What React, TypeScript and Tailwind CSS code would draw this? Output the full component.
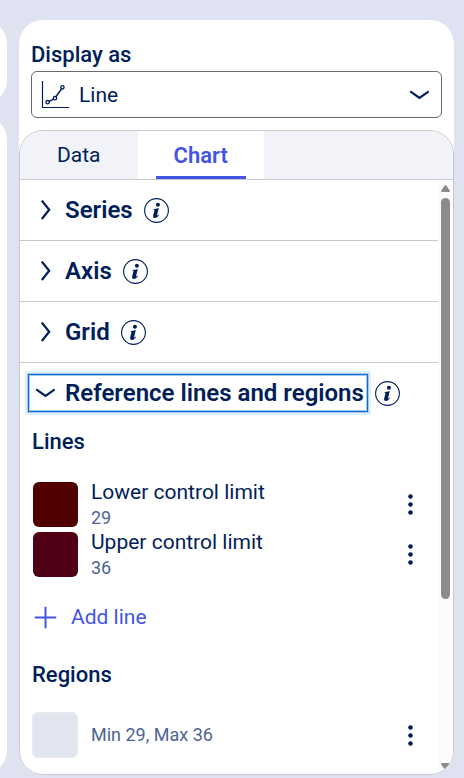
import React, { useState } from "react";

const lines = [
  { name: "Lower control limit", value: 29, swatch: "bg-[#500000]" },
  { name: "Upper control limit", value: 36, swatch: "bg-[#500014]" },
];

function Chevron({ open }: { open?: boolean }) {
  return (
    <svg
      className="w-5 h-5 shrink-0"
      viewBox="0 0 20 20"
      fill="none"
      stroke="currentColor"
      strokeWidth="2.2"
    >
      {open ? (
        <path d="M1.2 6.4 L10.5 13 L19.8 6.4" />
      ) : (
        <path d="M6.8 0.6 L14.2 9.8 L6.8 19" />
      )}
    </svg>
  );
}

function InfoButton({ label }: { label: string }) {
  return (
    <button type="button" aria-label={`About ${label}`} className="shrink-0">
      <svg className="w-[25px] h-[25px]" viewBox="0 0 25 25" fill="none">
        <circle cx="12.5" cy="12.5" r="11.9" stroke="currentColor" strokeWidth="1.1" />
        <circle cx="13.9" cy="6.7" r="2" fill="currentColor" />
        <path
          d="M9.4 11 C11.3 10.9 12.9 10.6 14.8 10 L13 17.2 C12.8 18.1 13.2 18 14.7 16.6 L15.1 17 C13.6 18.9 12.4 19.9 11 19.9 C9.4 19.9 8.8 18.9 9.2 17.3 L10.4 12.7 C10.6 11.9 10.4 11.7 9.3 11.6 Z"
          fill="currentColor"
        />
      </svg>
    </button>
  );
}

function MoreButton({ label }: { label: string }) {
  return (
    <button type="button" aria-label={`Options for ${label}`} className="px-2">
      <svg className="w-5 h-6" viewBox="0 0 20 24" fill="currentColor">
        <circle cx="10.5" cy="4.5" r="2.3" />
        <circle cx="10.5" cy="12.5" r="2.3" />
        <circle cx="10.5" cy="20.5" r="2.3" />
      </svg>
    </button>
  );
}

function SectionHeader({
  title,
  open,
  onToggle,
}: {
  title: string;
  open: boolean;
  onToggle: () => void;
}) {
  return (
    <div className="h-[60px] px-2 flex items-center gap-[7px]">
      <button
        type="button"
        aria-expanded={open}
        onClick={onToggle}
        className={
          open
            ? "h-[38px] pl-[6px] pr-[3px] flex items-center gap-[10px] text-2xl font-semibold whitespace-nowrap border border-[#0f6cd0] shadow-[inset_0_0_0_1px_#a3c9ee,0_0_0_1px_#a3c9ee,0_0_0_3px_#e3effa]"
            : "h-[38px] pl-[6px] pr-[3px] flex items-center gap-[10px] text-2xl font-semibold whitespace-nowrap border border-transparent"
        }
      >
        <Chevron open={open} />
        {title}
      </button>
      <InfoButton label={title} />
    </div>
  );
}

function AddButton({ children }: { children: React.ReactNode }) {
  return (
    <button
      type="button"
      className="pl-[14px] flex items-center gap-[14px] text-[21px] leading-7 text-[#4355e4]"
    >
      <svg className="w-[23px] h-[23px]" viewBox="0 0 23 23" fill="none" stroke="currentColor" strokeWidth="2">
        <path d="M11.5 0.8 V22.2 M0.8 11.5 H22.2" />
      </svg>
      {children}
    </button>
  );
}

export default function App() {
  const [tab, setTab] = useState("Chart");
  const [openSection, setOpenSection] = useState("Reference lines and regions");

  const toggle = (title: string) =>
    setOpenSection(openSection === title ? "" : title);

  return (
    <div className="min-h-screen flex gap-3 pr-[10px] bg-[#dfe3f1] text-[#001e5a] font-[Roboto,sans-serif]">
      <div className="w-[7px] shrink-0 flex flex-col items-end gap-3 pt-5 pb-1 overflow-hidden">
        <div className="w-16 h-[84px] rounded-3xl bg-white" />
        <div className="w-16 flex-1 rounded-3xl bg-white" />
      </div>

      <main className="flex-1 min-w-0 mt-5 mb-[3px] flex flex-col rounded-3xl bg-white">
        <div className="px-3 pt-[21px]">
          <label htmlFor="display-as" className="block text-[22px] leading-7 font-medium">
            Display as
          </label>
          <div className="relative mt-[2px]">
            <select
              id="display-as"
              className="w-full h-[47px] pt-[2px] pl-[47px] pr-12 appearance-none rounded-md border border-[#6b6b6b] bg-white text-[21px]"
            >
              <option>Line</option>
              <option>Bar</option>
            </select>
            <svg
              className="absolute left-[10px] top-[9px] w-7 h-7 pointer-events-none"
              viewBox="0 0 28 28"
              fill="none"
              stroke="currentColor"
            >
              <path d="M1.5 1 V27.5 H28" strokeWidth="1.2" />
              <path d="M8 21.6 L12.8 18.9 M15 16.5 L20.5 9" strokeWidth="1.4" />
              <circle cx="6.6" cy="22.2" r="1.7" strokeWidth="1.3" />
              <circle cx="14" cy="18.2" r="1.7" strokeWidth="1.3" />
              <circle cx="21.4" cy="7.3" r="1.7" strokeWidth="1.3" />
            </svg>
            <div className="absolute right-[13px] top-[14px] pointer-events-none">
              <Chevron open />
            </div>
          </div>
        </div>

        <section className="mt-3 flex-1 flex flex-col rounded-3xl border border-[#c9c9cb] overflow-hidden">
          <div role="tablist" className="h-[49px] flex bg-[#f2f3f9] border-b border-[#c9c9cb]">
            {["Data", "Chart"].map((name) => (
              <button
                key={name}
                type="button"
                role="tab"
                aria-selected={tab === name}
                onClick={() => setTab(name)}
                className={
                  tab === name
                    ? "px-[18px] flex bg-white text-[22px] font-semibold text-[#4355e4]"
                    : "px-[19px] flex text-[21px]"
                }
              >
                <span
                  className={
                    tab === name
                      ? "h-full px-[18px] pt-1 flex items-center border-b-3 border-[#4355e4]"
                      : "h-full px-[18px] pt-1 flex items-center border-b-3 border-transparent"
                  }
                >
                  {name}
                </span>
              </button>
            ))}
          </div>

          <div className="flex-1 flex">
            <div className="flex-1 min-w-0">
              {["Series", "Axis", "Grid"].map((title) => (
                <div key={title} className="border-b border-[#c9c9cb]">
                  <SectionHeader
                    title={title}
                    open={openSection === title}
                    onToggle={() => toggle(title)}
                  />
                </div>
              ))}
              <SectionHeader
                title="Reference lines and regions"
                open={openSection === "Reference lines and regions"}
                onToggle={() => toggle("Reference lines and regions")}
              />

              <h3 className="mt-[5px] px-3 text-[22px] leading-7 font-medium">Lines</h3>
              <ul className="mt-[23px] pl-[13px] pr-[10px]">
                {lines.map((line) => (
                  <li key={line.name} className="h-[50px] flex items-center gap-[13px]">
                    <div className={`w-[45px] h-[45px] shrink-0 rounded-md ${line.swatch}`} />
                    <div className="flex-1">
                      <div className="text-[21px] leading-7">{line.name}</div>
                      <div className="text-lg leading-6 text-[#4d6592]">{line.value}</div>
                    </div>
                    <MoreButton label={line.name} />
                  </li>
                ))}
              </ul>
              <div className="mt-6">
                <AddButton>Add line</AddButton>
              </div>

              <h3 className="mt-[30px] px-3 text-[22px] leading-7 font-medium">Regions</h3>
              <div className="mt-[23px] mb-[15px] pl-3 pr-[10px] flex items-center gap-[13px]">
                <div className="w-[46px] h-[46px] shrink-0 rounded-md border border-[#ebebeb] bg-[#e2e6f0]" />
                <div className="flex-1 text-lg text-[#4d6592]">Min 29, Max 36</div>
                <MoreButton label="Min 29, Max 36" />
              </div>
            </div>

            <div className="w-[15px] shrink-0 pt-[5px] pb-1 flex flex-col items-center bg-[#fcfcfc] text-[#8b8b8b]">
              <svg className="w-[9px] h-[7px]" viewBox="0 0 9 7" fill="currentColor">
                <path d="M3.7 0.6 Q4.5 -0.4 5.3 0.6 L8.8 5.6 Q9.3 7 8 7 H1 Q-0.3 7 0.2 5.6 Z" />
              </svg>
              <div className="mt-[6px] flex-1 w-full flex flex-col items-center">
                <div className="w-[9px] h-[71%] rounded-full bg-[#8b8b8b]" />
              </div>
              <svg className="w-[9px] h-[7px]" viewBox="0 0 9 7" fill="currentColor">
                <path d="M3.7 6.4 Q4.5 7.4 5.3 6.4 L8.8 1.4 Q9.3 0 8 0 H1 Q-0.3 0 0.2 1.4 Z" />
              </svg>
            </div>
          </div>
        </section>
      </main>
    </div>
  );
}
